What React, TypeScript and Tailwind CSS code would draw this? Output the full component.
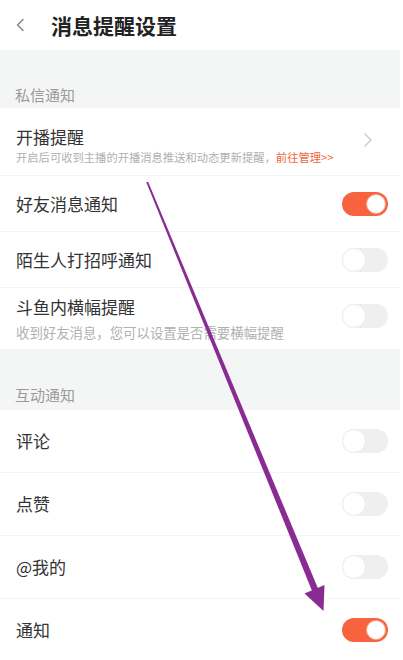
import React from "react";

const font = { fontFamily: '"Noto Sans CJK SC", "Noto Sans", sans-serif' };

function Toggle({ on }: { on: boolean }) {
  return on ? (
    <div className="w-[46px] h-[24px] rounded-full bg-[#f6633e] flex items-center justify-end pr-[2px] shrink-0">
      <div className="w-[20px] h-[20px] rounded-full bg-white border border-[#f7a48c]" />
    </div>
  ) : (
    <div className="w-[46px] h-[24px] rounded-full bg-[#efefef] flex items-center justify-start shrink-0">
      <div className="w-[24px] h-[24px] rounded-full bg-white border border-[#ececec]" />
    </div>
  );
}

function SectionLabel({ text, h, pb }: { text: string; h: string; pb: string }) {
  return (
    <div className={`bg-[#f4f6f5] flex items-end pl-[15px] ${h} ${pb}`}>
      <span className="text-[15px] leading-[18px] text-[#9a9a9a]">{text}</span>
    </div>
  );
}

function Row({ title, on, h, last }: { title: string; on: boolean; h: string; last?: boolean }) {
  return (
    <div className={`flex items-center justify-between pl-[16px] pr-[12px] ${h} ${last ? "" : "border-b border-[#f3f3f3]"}`}>
      <span className="text-[17px] leading-[22px] text-[#333333]">{title}</span>
      <Toggle on={on} />
    </div>
  );
}

export default function App() {
  return (
    <div className="relative w-[403px] h-[660px] overflow-hidden bg-white" style={font}>
      <div className="w-[400px]">
        {/* Header */}
        <div className="h-[50px] flex items-center bg-white">
          <div className="w-[51px] pl-[15px] flex items-center">
            <svg width="10" height="14" viewBox="0 0 10 14" fill="none">
              <path d="M8 1.5 L2.5 7 L8 12.5" stroke="#8c8c8c" strokeWidth="1.6" strokeLinecap="round" strokeLinejoin="round" />
            </svg>
          </div>
          <span className="text-[21px] leading-[26px] font-bold text-[#222222]">消息提醒设置</span>
        </div>

        <SectionLabel text="私信通知" h="h-[58px]" pb="pb-[4px]" />

        {/* 开播提醒 */}
        <div className="h-[68px] flex items-start justify-between pl-[16px] pr-[28px] pt-[18px] border-b border-[#f3f3f3]">
          <div className="flex flex-col">
            <span className="text-[17px] leading-[22px] text-[#333333]">开播提醒</span>
            <span className="text-[11.3px] leading-[16px] text-[#b0b0b0] mt-[1px] whitespace-nowrap">
              开启后可收到主播的开播消息推送和动态更新提醒，
              <span className="text-[#f0643c]">前往管理&gt;&gt;</span>
            </span>
          </div>
          <div className="mt-[7px]">
            <svg width="8" height="14" viewBox="0 0 8 14" fill="none">
              <path d="M1 1 L7 7 L1 13" stroke="#c9c9c9" strokeWidth="1.3" strokeLinecap="round" strokeLinejoin="round" />
            </svg>
          </div>
        </div>

        <Row title="好友消息通知" on={true} h="h-[56px]" />
        <Row title="陌生人打招呼通知" on={false} h="h-[56px]" />

        {/* 斗鱼内横幅提醒 */}
        <div className="h-[61px] flex items-start justify-between pl-[16px] pr-[12px] pt-[8px]">
          <div className="flex flex-col">
            <span className="text-[17px] leading-[22px] text-[#333333]">斗鱼内横幅提醒</span>
            <span className="text-[13.4px] leading-[18px] text-[#b0b0b0] mt-[5px] whitespace-nowrap">
              收到好友消息，您可以设置是否需要横幅提醒
            </span>
          </div>
          <div className="mt-[8px]">
            <Toggle on={false} />
          </div>
        </div>

        <SectionLabel text="互动通知" h="h-[61px]" pb="pb-[6px]" />

        <Row title="评论" on={false} h="h-[63px]" />
        <Row title="点赞" on={false} h="h-[63px]" />
        <Row title="@我的" on={false} h="h-[63px]" />
        <Row title="通知" on={true} h="h-[62px]" last />
      </div>

      {/* Annotation arrow overlay */}
      <svg className="absolute left-0 top-0 pointer-events-none" width="403" height="660" viewBox="0 0 403 660">
        <polygon points="146.2,182 148.2,182 319.5,592 312.5,592" fill="#8a2b94" />
        <polygon points="323.5,611 304.5,593.5 324.5,585" fill="#8a2b94" />
      </svg>
    </div>
  );
}
